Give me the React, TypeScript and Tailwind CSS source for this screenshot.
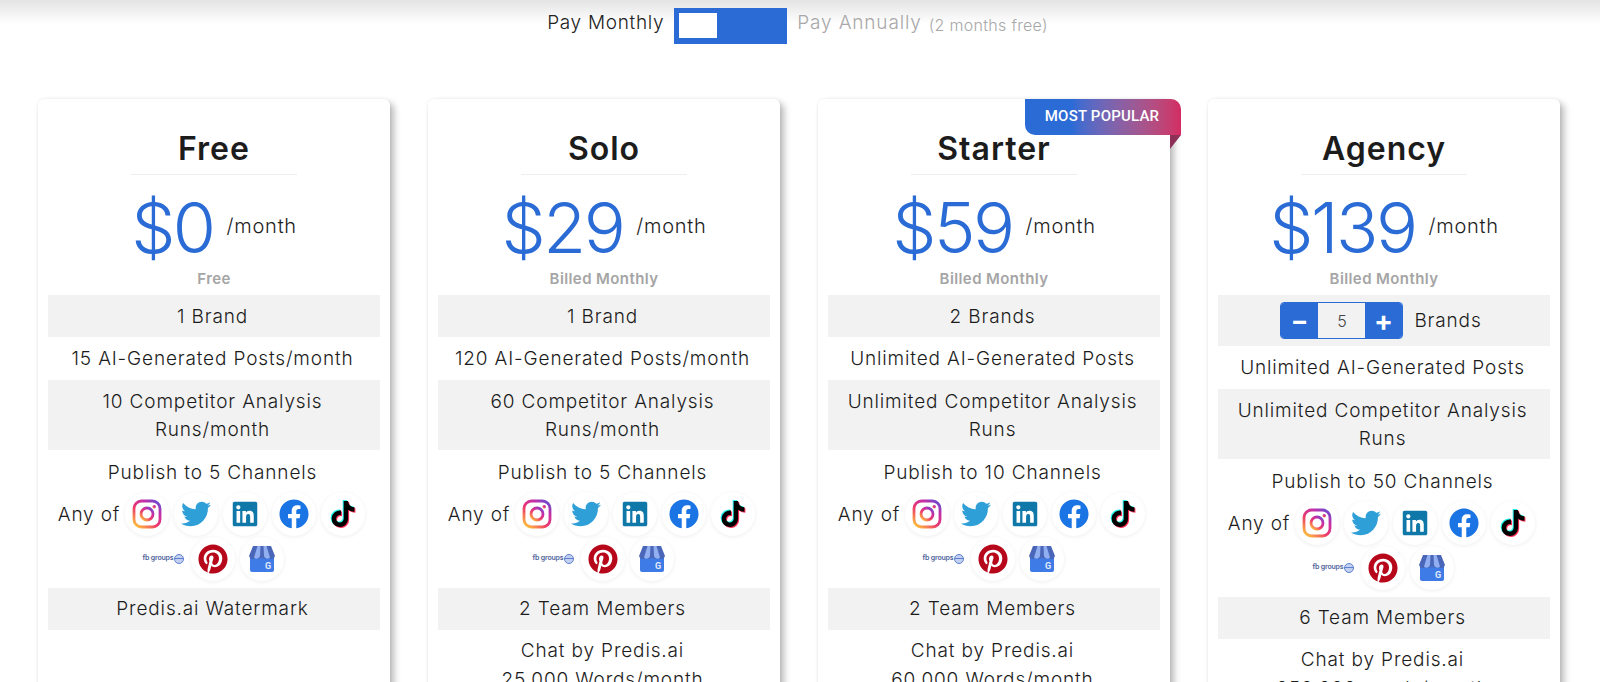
import { FaFacebook, FaLinkedin, FaPinterest, FaTiktok, FaTwitter } from "react-icons/fa";

// ---- Data ---------------------------------------------------------------

const plans = [
  {
    name: "Free",
    price: "$0",
    billed: "Free",
    brands: "1 Brand",
    posts: "15 AI-Generated Posts/month",
    competitor: ["10 Competitor Analysis", "Runs/month"],
    channels: "Publish to 5 Channels",
    team: "Predis.ai Watermark",
    chat: [],
  },
  {
    name: "Solo",
    price: "$29",
    billed: "Billed Monthly",
    brands: "1 Brand",
    posts: "120 AI-Generated Posts/month",
    competitor: ["60 Competitor Analysis", "Runs/month"],
    channels: "Publish to 5 Channels",
    team: "2 Team Members",
    chat: ["Chat by Predis.ai", "25,000 Words/month"],
  },
  {
    name: "Starter",
    price: "$59",
    billed: "Billed Monthly",
    brands: "2 Brands",
    posts: "Unlimited AI-Generated Posts",
    competitor: ["Unlimited Competitor Analysis", "Runs"],
    channels: "Publish to 10 Channels",
    team: "2 Team Members",
    chat: ["Chat by Predis.ai", "60,000 Words/month"],
    popular: true,
  },
  {
    name: "Agency",
    price: "$139",
    billed: "Billed Monthly",
    brands: null,
    posts: "Unlimited AI-Generated Posts",
    competitor: ["Unlimited Competitor Analysis", "Runs"],
    channels: "Publish to 50 Channels",
    team: "6 Team Members",
    chat: ["Chat by Predis.ai", "250,000 words/month"],
  },
];

// ---- Icons --------------------------------------------------------------

function IconBox({ children }: { children: React.ReactNode }) {
  return (
    <span className="flex h-[45px] w-[49px] items-center justify-center">
      <span className="flex h-[44px] w-[44px] items-center justify-center rounded-full shadow-[0_1px_4px_rgba(0,0,0,0.07)]">
        {children}
      </span>
    </span>
  );
}

function Instagram() {
  return (
    <svg viewBox="0 0 30 30" className="h-[30px] w-[30px]" fill="none">
      <defs>
        <linearGradient id="ig" x1="0.1" y1="1" x2="0.9" y2="0">
          <stop offset="0" stopColor="#fdc13c" />
          <stop offset="0.4" stopColor="#ee3a6a" />
          <stop offset="0.75" stopColor="#c42fa8" />
          <stop offset="1" stopColor="#6a4bd0" />
        </linearGradient>
      </defs>
      <rect x="2" y="2" width="26" height="26" rx="7.5" stroke="url(#ig)" strokeWidth="2.8" />
      <circle cx="15" cy="15" r="6" stroke="url(#ig)" strokeWidth="2.8" />
      <circle cx="22.2" cy="7.8" r="1.7" fill="url(#ig)" />
    </svg>
  );
}

function GoogleBusiness() {
  return (
    <svg viewBox="0 0 30 30" className="h-[30px] w-[30px]">
      <path d="M3 13h24v13a2 2 0 0 1-2 2H5a2 2 0 0 1-2-2z" fill="#3f7be6" />
      <path d="M6 2h18l4 10a4 4 0 0 1-7 1.5 4 4 0 0 1-6 0 4 4 0 0 1-6 0A4 4 0 0 1 2 12z" fill="#4a66b8" />
      <path d="M10.5 2h3L13 12a3.5 3.5 0 0 1-6 1.5zM16.500 2h3l3.500 11.500a3.500 3.500 0 0 1-6-1.500z" fill="#90aef0" />
      <text x="21.500" y="25" textAnchor="middle" fontSize="9" fontWeight="700" fontFamily="Roboto, sans-serif" fill="#e4ecfb">
        G
      </text>
    </svg>
  );
}

function ChannelIcons() {
  return (
    <div className="-mt-[2px] flex flex-wrap items-center justify-center pr-[3px]">
      <span className="mr-[2px] h-[45px] text-[19px] leading-[48px]">Any of</span>
      <IconBox>
        <Instagram />
      </IconBox>
      <IconBox>
        <FaTwitter className="text-[30px] text-[#2f9fd8]" />
      </IconBox>
      <IconBox>
        <FaLinkedin className="text-[28px] text-[#0f78a8]" />
      </IconBox>
      <IconBox>
        <FaFacebook className="text-[30px] text-[#1b74e4]" />
      </IconBox>
      <IconBox>
        <FaTiktok className="text-[26px] text-black [filter:drop-shadow(-1px_-1px_0_#25f4ee)_drop-shadow(1px_1px_0_#fe2c55)]" />
      </IconBox>
      <span className="flex h-[45px] w-[49px] items-center justify-center gap-[1px] whitespace-nowrap text-[7px] font-semibold tracking-[-0.2px] text-[#50639c]">
        fb groups
        <span className="flex h-[10px] w-[10px] shrink-0 items-center rounded-full border border-[#5f7fd0] bg-[#c3d0f0]">
          <span className="h-[1px] w-full bg-[#5f7fd0]" />
        </span>
      </span>
      <IconBox>
        <FaPinterest className="text-[30px] text-[#b7081b]" />
      </IconBox>
      <IconBox>
        <GoogleBusiness />
      </IconBox>
    </div>
  );
}

// ---- Component ------------------------------------------------------------

function Stepper() {
  return (
    <div className="flex h-[51px] items-center justify-center bg-[#f2f2f2] pr-[6px]">
      <div className="flex h-[37px] w-[123px] overflow-hidden rounded-[4px] border border-[#2a6bd6]">
        <span className="flex w-[37px] items-center justify-center bg-[#2a6bd6] text-[26px] font-bold text-white">
          −
        </span>
        <span className="flex flex-1 items-center justify-center text-[16px] tracking-normal text-[#444]">5</span>
        <span className="flex w-[37px] items-center justify-center bg-[#2a6bd6] text-[28px] font-bold text-white">
          +
        </span>
      </div>
      <span className="mt-[1px] ml-[11px]">Brands</span>
    </div>
  );
}

function PlanCard({ plan }: { plan: (typeof plans)[number] }) {
  return (
    <div className="relative w-[352px] shrink-0 rounded-[6px] bg-white px-[10px] pt-[30px] pb-[40px] text-center text-[19px] font-light tracking-[0.85px] text-[#1c1c1c] shadow-[4px_4px_7px_rgba(0,0,0,0.28),0_0_3px_rgba(0,0,0,0.07)]">
      {plan.popular && (
        <>
          <div className="absolute -right-[11px] top-0 flex h-[36px] w-[156px] items-center justify-center rounded-tr-[10px] rounded-bl-[10px] bg-gradient-to-r from-[#2a6bd6] from-30% to-[#d32b62] pr-[2px] pb-[1px] font-[Roboto,sans-serif] text-[15px] font-medium tracking-[0.2px] text-white">
            MOST POPULAR
          </div>
          <div className="absolute -right-[11px] top-[36px] h-0 w-0 border-t-[14px] border-r-[11px] border-t-[#8e2f58] border-r-transparent" />
        </>
      )}
      <div className="mx-auto w-[166px] border-b border-[#eeeeee] pb-[5px] text-[32px] leading-[40px] font-semibold tracking-[1px]">
        {plan.name}
      </div>
      <div className="mt-[2px] flex h-[88px] items-center justify-center pt-[14px]">
        <span className="text-[70px] leading-none font-[350] tracking-[-2.5px] text-[#2a6bd6]">
          {plan.price}
        </span>
        <span className="ml-[13px] mt-[-4px] text-[20px] tracking-[0.75px]">/month</span>
      </div>
      <div className="mb-[6px] h-[24px] pt-[2px] text-[15px] leading-[24px] font-semibold tracking-[0.4px] text-[#a5a5a5]">
        {plan.billed}
      </div>
      {plan.brands ? (
        <div className="bg-[#f2f2f2] pt-[8px] pr-[3px] pb-[6px] leading-[28px]">{plan.brands}</div>
      ) : (
        <Stepper />
      )}
      <div className="py-[7px] pr-[3px] leading-[29px]">{plan.posts}</div>
      <div className="bg-[#f2f2f2] pt-[8px] pr-[3px] pb-[6px] leading-[28px]">
        {plan.competitor.map((line) => (
          <div key={line}>{line}</div>
        ))}
      </div>
      <div className="pt-[8px] pr-[3px] pb-[6px] leading-[29px]">{plan.channels}</div>
      <ChannelIcons />
      <div className="mt-[7px] bg-[#f2f2f2] py-[7px] pr-[3px] leading-[28px]">{plan.team}</div>
      <div className="pt-[6px] pr-[3px] pb-[8px] leading-[29px]">
        {plan.chat.map((line) => (
          <div key={line}>{line}</div>
        ))}
      </div>
    </div>
  );
}

export default function App() {
  return (
    <div className="relative h-[682px] overflow-hidden bg-white font-[Inter,sans-serif]">
      {/* header shadow cut off at the top of the page */}
      <div className="absolute inset-x-0 top-0 h-[24px] bg-gradient-to-b from-[#e4e4e4] to-white" />

      <div className="relative flex h-[99px] items-start justify-center pt-[8px] pr-[5px]">
        <div className="flex h-[36px] items-center font-light">
          <span className="mt-[-5px] text-[19px] tracking-[0.7px] text-[#222]">Pay Monthly</span>
          <div className="mx-[10px] h-[36px] w-[113px] bg-[#2a6bd6] pt-[5px] pl-[5px]">
            <div className="h-[25px] w-[38px] bg-white" />
          </div>
          <span className="mt-[-5px] text-[19px] tracking-[0.85px] text-[#a8a8a8]">Pay Annually</span>
          <span className="mt-[-3px] ml-[7px] text-[16px] tracking-[0.3px] text-[#a8a8a8]">(2 months free)</span>
        </div>
      </div>

      <div className="relative flex justify-center gap-[38px] pr-[2px]">
        {plans.map((plan) => (
          <PlanCard key={plan.name} plan={plan} />
        ))}
      </div>
    </div>
  );
}
